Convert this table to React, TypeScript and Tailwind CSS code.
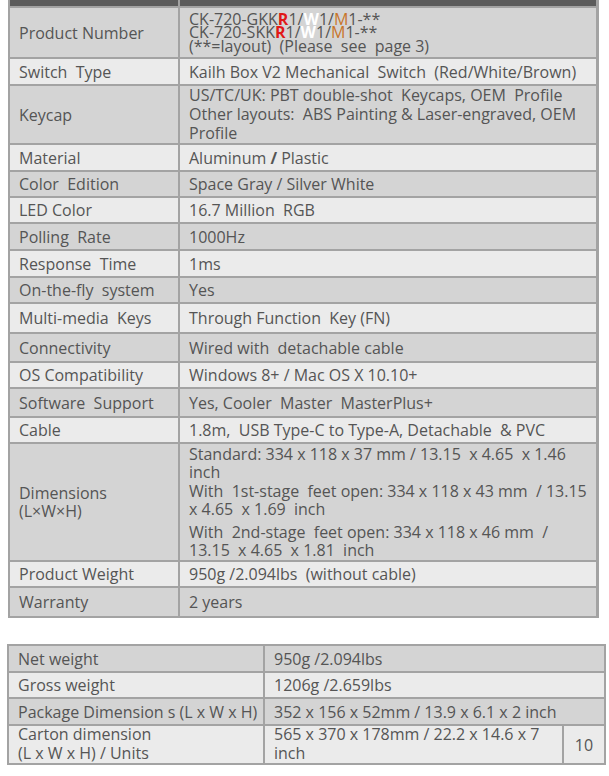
import React from "react";

type Row = { label: React.ReactNode; value: React.ReactNode; h: number; dark: boolean };

const R = () => <span className="text-[#e01818] font-bold">R</span>;
const W = () => <span className="text-white font-bold">W</span>;
const M = () => <span className="text-[#c8742a]">M</span>;

const rows: Row[] = [
  {
    label: "Product Number",
    h: 51,
    dark: true,
    value: (
      <div className="leading-[13.5px] pt-[1px]">
        <div>CK-720-GKK<R />1/<W />1/<M />1-**</div>
        <div>CK-720-SKK<R />1/<W />1/<M />1-**</div>
        <div>(**=layout)&nbsp; (Please&nbsp; see&nbsp; page 3)</div>
      </div>
    ),
  },
  { label: "Switch  Type", h: 27, dark: false, value: "Kailh Box V2 Mechanical  Switch  (Red/White/Brown)" },
  {
    label: "Keycap",
    h: 59,
    dark: true,
    value: (
      <div className="leading-[19px]">
        <div>US/TC/UK: PBT double-shot  Keycaps, OEM  Profile</div>
        <div>Other layouts:  ABS Painting &amp; Laser-engraved, OEM</div>
        <div>Profile</div>
      </div>
    ),
  },
  {
    label: "Material",
    h: 27,
    dark: false,
    value: (
      <span>
        Aluminum <span className="font-bold">/</span> Plastic
      </span>
    ),
  },
  { label: "Color  Edition", h: 26, dark: true, value: "Space Gray / Silver White" },
  { label: "LED Color", h: 26, dark: false, value: "16.7 Million  RGB" },
  { label: "Polling  Rate", h: 27, dark: true, value: "1000Hz" },
  { label: "Response  Time", h: 27, dark: false, value: "1ms" },
  { label: "On-the-fly  system", h: 26, dark: true, value: "Yes" },
  { label: "Multi-media  Keys", h: 30, dark: false, value: "Through Function  Key (FN)" },
  { label: "Connectivity", h: 29, dark: true, value: "Wired with  detachable cable" },
  { label: "OS Compatibility", h: 26, dark: false, value: "Windows 8+ / Mac OS X 10.10+" },
  { label: "Software  Support", h: 29, dark: true, value: "Yes, Cooler  Master  MasterPlus+" },
  { label: "Cable", h: 26, dark: false, value: "1.8m,  USB Type-C to Type-A, Detachable  & PVC" },
  {
    label: (
      <div className="leading-[18px]">
        <div>Dimensions</div>
        <div>(L×W×H)</div>
      </div>
    ),
    h: 118,
    dark: true,
    value: (
      <div className="leading-[18.5px]">
        <div>Standard: 334 x 118 x 37 mm / 13.15&nbsp; x 4.65&nbsp; x 1.46</div>
        <div>inch</div>
        <div>With&nbsp; 1st-stage&nbsp; feet open: 334 x 118 x 43 mm&nbsp; / 13.15</div>
        <div>x 4.65&nbsp; x 1.69&nbsp; inch</div>
        <div className="mt-[4px]">With&nbsp; 2nd-stage&nbsp; feet open: 334 x 118 x 46 mm&nbsp; /</div>
        <div>13.15&nbsp; x 4.65&nbsp; x 1.81&nbsp; inch</div>
      </div>
    ),
  },
  { label: "Product Weight", h: 26, dark: false, value: "950g /2.094lbs  (without cable)" },
  { label: "Warranty", h: 28, dark: true, value: "2 years" },
];

const font = { fontFamily: '"Open Sans", "Noto Sans", sans-serif' };

export default function App() {
  return (
    <div className="w-[609px] h-[776px] bg-white relative overflow-hidden text-[#555555] text-[16px] whitespace-pre" style={font}>
      <div className="ml-[8px] w-[591px] border-l-2 border-r-[3px] border-[#a3a3a3] border-b-2">
        <div className="flex h-[8px] bg-[#5c5c5c] border-b-2 border-[#a3a3a3]">
          <div className="w-[170px] border-r-2 border-[#a3a3a3]" />
          <div className="flex-1" />
        </div>
        {rows.map((r, i) => (
          <div
            key={i}
            className={`flex ${i < rows.length - 1 ? "border-b-2" : ""} border-[#a3a3a3] ${r.dark ? "bg-[#d4d4d4]" : "bg-[#ebebeb]"}`}
            style={{ height: r.h }}
          >
            <div className="w-[170px] border-r-2 border-[#a3a3a3] flex items-center pl-[9px]">{r.label}</div>
            <div className="flex-1 flex items-center pl-[9px] overflow-hidden">{r.value}</div>
          </div>
        ))}
      </div>

      <div className="mt-[26px] ml-[7px] w-[599px] border-2 border-[#a3a3a3]">
        <div className="flex h-[27px] bg-[#d4d4d4] border-b-2 border-[#a3a3a3]">
          <div className="w-[256px] border-r-2 border-[#a3a3a3] flex items-center pl-[9px]">Net weight</div>
          <div className="flex-1 flex items-center pl-[9px]">950g /2.094lbs</div>
        </div>
        <div className="flex h-[26px] bg-[#ebebeb] border-b-2 border-[#a3a3a3]">
          <div className="w-[256px] border-r-2 border-[#a3a3a3] flex items-center pl-[9px]">Gross weight</div>
          <div className="flex-1 flex items-center pl-[9px]">1206g /2.659lbs</div>
        </div>
        <div className="flex h-[27px] bg-[#d4d4d4] border-b-2 border-[#a3a3a3]">
          <div className="w-[256px] border-r-2 border-[#a3a3a3] flex items-center pl-[9px] overflow-hidden">Package Dimension s (L x W x H)</div>
          <div className="flex-1 flex items-center pl-[9px]">352 x 156 x 52mm / 13.9 x 6.1 x 2 inch</div>
        </div>
        <div className="flex h-[37px] bg-[#ebebeb] overflow-hidden">
          <div className="w-[256px] border-r-2 border-[#a3a3a3] pl-[9px] leading-[19px] overflow-hidden">
            <div className="-mt-[1px]">Carton dimension</div>
            <div>(L x W x H) / Units</div>
          </div>
          <div className="w-[299px] border-r-2 border-[#a3a3a3] pl-[9px] leading-[19px] overflow-hidden">
            <div className="-mt-[1px]">565 x 370 x 178mm / 22.2 x 14.6 x 7</div>
            <div>inch</div>
          </div>
          <div className="flex-1 flex items-center justify-center">10</div>
        </div>
      </div>
    </div>
  );
}
